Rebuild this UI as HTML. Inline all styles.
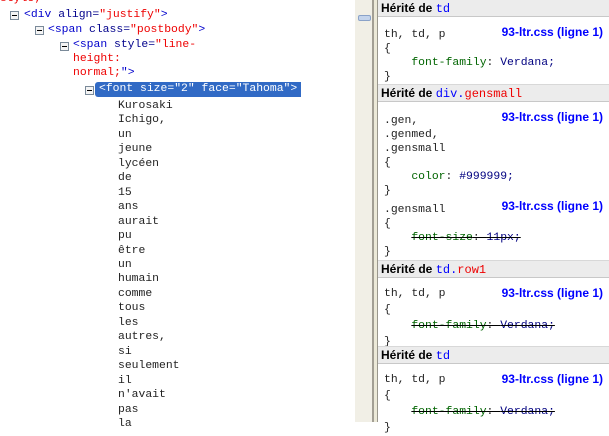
<!DOCTYPE html>
<html><head><meta charset="utf-8"><style>
body{margin:0;width:609px;height:422px;overflow:hidden;background:#fff;position:relative;font-family:"Liberation Mono",monospace;font-size:11.4px}
.a{position:absolute;white-space:pre;line-height:14px}
.t{color:#00008b}.tag{color:#0000cc}.r{color:#e00}.k{color:#222}
.box{position:absolute;width:7px;height:7px;border:1px solid #7a8a99;background:#f4f4f4}
.box:after{content:"";position:absolute;left:1px;top:3px;width:5px;height:1px;background:#000}
.hd{position:absolute;left:378px;width:231px;height:16px;background:#ececec;border-top:1px solid #d8d8d8;border-bottom:1px solid #c8c8c8;font-family:"Liberation Sans",sans-serif;font-weight:bold;font-size:12px;line-height:16px;padding-left:3px;box-sizing:border-box;height:18px}
.hd span{font-family:"Liberation Mono",monospace;font-weight:normal;color:#00f}
.f{position:absolute;right:6px;color:#00f;font-family:"Liberation Sans",sans-serif;font-weight:bold;font-size:12px;line-height:14px}
.g{color:#006400}.b{color:#000080}.s{text-decoration:line-through;text-decoration-color:#000}
</style></head><body>
<div class="a r" style="left:0;top:-8px">style;</div>
<div class="box" style="left:10px;top:11px"></div>
<div class="a tag" style="left:24px;top:8px">&lt;div <span class="t">align=</span><span class="r">"justify"</span>&gt;</div>
<div class="box" style="left:35px;top:26px"></div>
<div class="a tag" style="left:48px;top:23px">&lt;span <span class="t">class=</span><span class="r">"postbody"</span>&gt;</div>
<div class="box" style="left:60px;top:42px"></div>
<div class="a tag" style="left:73px;top:38px">&lt;span <span class="t">style=</span><span class="r">"line-</span></div>
<div class="a r" style="left:73px;top:52px">height:</div>
<div class="a r" style="left:73px;top:66px">normal;<span class="tag">"&gt;</span></div>
<div class="box" style="left:85px;top:86px"></div>
<div style="position:absolute;left:95px;top:82px;width:206px;height:15px;background:#316ac5;border-radius:3px 0 0 3px"></div>
<div class="a" style="left:99px;top:82px;color:#fff">&lt;font size="2" face="Tahoma"&gt;</div>
<div class="a k" style="left:118px;top:99px;line-height:14.45px">Kurosaki
Ichigo,
un
jeune
lycéen
de
15
ans
aurait
pu
être
un
humain
comme
tous
les
autres,
si
seulement
il
n'avait
pas
la</div>
<div style="position:absolute;left:355px;top:0;width:17px;height:422px;background:#f1efe6"></div>
<div style="position:absolute;left:372px;top:0;width:2px;height:422px;background:#a39f94"></div>
<div style="position:absolute;left:374px;top:0;width:3px;height:422px;background:#ece9d8"></div>
<div style="position:absolute;left:377px;top:0;width:1px;height:422px;background:#9a978c"></div>
<div style="position:absolute;left:358px;top:15px;width:11px;height:4px;background:#c4d4ec;border:1px solid #8aa2c8;border-radius:2px"></div>

<div class="hd" style="top:-1px">Hérité de <span>td</span></div>
<div class="f" style="top:25px">93-ltr.css (ligne 1)</div>
<div class="a k" style="left:384px;top:28px">th, td, p
{
    <span class="g">font-family</span>: <span class="b">Verdana;</span>
}</div>
<div class="hd" style="top:84px">Hérité de <span>div.<span style="color:#e00">gensmall</span></span></div>
<div class="f" style="top:110px">93-ltr.css (ligne 1)</div>
<div class="a k" style="left:384px;top:114px">.gen,
.genmed,
.gensmall
{
    <span class="g">color</span>: <span class="b">#999999;</span>
}</div>
<div class="f" style="top:199px">93-ltr.css (ligne 1)</div>
<div class="a k" style="left:384px;top:203px">.gensmall
{
    <span class="s"><span class="g">font-size</span>: <span class="b">11px;</span></span>
}</div>
<div class="hd" style="top:260px">Hérité de <span>td.<span style="color:#e00">row1</span></span></div>
<div class="f" style="top:286px">93-ltr.css (ligne 1)</div>
<div class="a k" style="left:384px;top:286px;line-height:16px">th, td, p
{
    <span class="s"><span class="g">font-family</span>: <span class="b">Verdana;</span></span>
}</div>
<div class="hd" style="top:346px">Hérité de <span>td</span></div>
<div class="f" style="top:372px">93-ltr.css (ligne 1)</div>
<div class="a k" style="left:384px;top:372px;line-height:16px">th, td, p
{
    <span class="s"><span class="g">font-family</span>: <span class="b">Verdana;</span></span>
}</div>
</body></html>
